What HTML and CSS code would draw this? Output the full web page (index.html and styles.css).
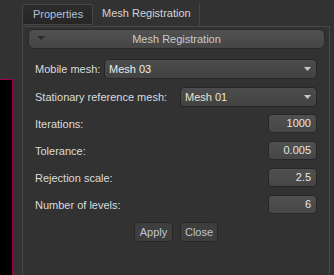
FILE: index.html
```html
<!DOCTYPE html>
<html lang="en">
<head>
  <meta charset="UTF-8" />
  <meta name="viewport" content="width=device-width, initial-scale=1.0" />
  <title>Mesh Registration</title>
  <link rel="stylesheet" href="styles.css">
</head>
<body>

  <div class="app">
    <div class="viewer"></div>

    <div class="dock">
      <div class="tabs">
        <div class="tab">Properties</div>
        <div class="tab tab-active">Mesh Registration</div>
      </div>

      <div class="panel">
        <div class="section-header">
          <svg class="section-arrow" width="8" height="4" viewBox="0 0 8 4"><path d="M0 0H8L4 4Z" fill="#2c2c2c"/></svg>
          Mesh Registration
        </div>

        <div class="form">
          <div class="row row-combo">
            <span class="label">Mobile mesh:</span>
            <div class="combo combo-wide">
              <span>Mesh 03</span>
              <svg width="7" height="4" viewBox="0 0 7 4"><path d="M0 0H7L3.5 4Z" fill="#c8c8c8"/></svg>
            </div>
          </div>
          <div class="row row-combo-last">
            <span class="label">Stationary reference mesh:</span>
            <div class="combo combo-narrow">
              <span class="cream">Mesh 01</span>
              <svg width="7" height="4" viewBox="0 0 7 4"><path d="M0 0H7L3.5 4Z" fill="#c8c8c8"/></svg>
            </div>
          </div>
          <div class="row">
            <span class="label">Iterations:</span>
            <div class="spin">1000</div>
          </div>
          <div class="row">
            <span class="label">Tolerance:</span>
            <div class="spin">0.005</div>
          </div>
          <div class="row">
            <span class="label">Rejection scale:</span>
            <div class="spin">2.5</div>
          </div>
          <div class="row">
            <span class="label">Number of levels:</span>
            <div class="spin">6</div>
          </div>

          <div class="actions">
            <button class="btn btn-apply">Apply</button>
            <button class="btn btn-close">Close</button>
          </div>
        </div>
      </div>
    </div>
  </div>

</body>
</html>
```

FILE: styles.css
```css
body {
  margin: 0;
  background-color: #323232;
  color: #dcdcdc;
  font-family: "Liberation Sans", Arial, sans-serif;
  font-size: 11px;
  height: 275px;
  overflow: hidden;
}

.app {
  display: flex;
  height: 275px;
}

.viewer {
  width: 12px;
  margin-top: 79px;
  background: #000;
  border-top: 1px solid #a3004b;
  border-right: 1px solid #a3004b;
}

.dock {
  margin-left: 9px;
  margin-top: 4px;
  width: 308px;
  display: flex;
  flex-direction: column;
}

.tabs {
  display: flex;
  height: 22px;
}

.tab {
  box-sizing: border-box;
  height: 21px;
  width: 71px;
  padding-left: 10px;
  line-height: 19px;
  color: #b4c0d6;
  background: linear-gradient(#2c2c2c, #262626);
  border: 1px solid #474747;
  border-radius: 2px 2px 0 0;
}

.tab-active {
  width: 107px;
  height: 22px;
  padding-left: 9px;
  color: #d4d4d4;
  background: none;
  border: none;
  border-right: 1px solid #474747;
  border-radius: 0;
}

.panel {
  flex: 1;
  border: 1px solid #474747;
  border-bottom: none;
  padding: 2px 4px 0 5px;
}

.section-header {
  position: relative;
  box-sizing: border-box;
  height: 20px;
  line-height: 18px;
  text-align: center;
  color: #cacaca;
  background: linear-gradient(#515151, #454545);
  border: 1px solid #2a2a2a;
  border-radius: 6px;
}

.section-arrow {
  position: absolute;
  left: 8px;
  top: 6px;
}

.form {
  padding: 10px 8px 0 7px;
}

.row {
  display: flex;
  align-items: center;
  justify-content: space-between;
  margin-bottom: 8px;
}

.row-combo-last {
  margin-bottom: 7px;
}

.combo {
  box-sizing: border-box;
  height: 20px;
  display: flex;
  align-items: center;
  justify-content: space-between;
  padding: 0 5px 0 4px;
  color: #ececec;
  background: linear-gradient(#4c4c4c, #424242);
  border: 1px solid #262626;
  border-radius: 4px;
}

.combo-wide {
  width: 213px;
}

.combo-narrow {
  width: 137px;
}

.cream {
  color: #ece4cc;
}

.spin {
  box-sizing: border-box;
  width: 49px;
  height: 19px;
  line-height: 17px;
  padding-right: 5px;
  text-align: right;
  color: #e6e6e6;
  background: linear-gradient(#505050, #464646);
  border: 1px solid #282828;
  border-radius: 4px;
}

.actions {
  display: flex;
  justify-content: center;
  gap: 7px;
}

.btn {
  box-sizing: border-box;
  height: 20px;
  padding: 0;
  font-family: inherit;
  font-size: 11px;
  color: #bcc6d8;
  background: #3e3e3e;
  border: 1px solid #262626;
  border-radius: 4px;
}

.btn-apply {
  width: 39px;
}

.btn-close {
  width: 38px;
}
```
